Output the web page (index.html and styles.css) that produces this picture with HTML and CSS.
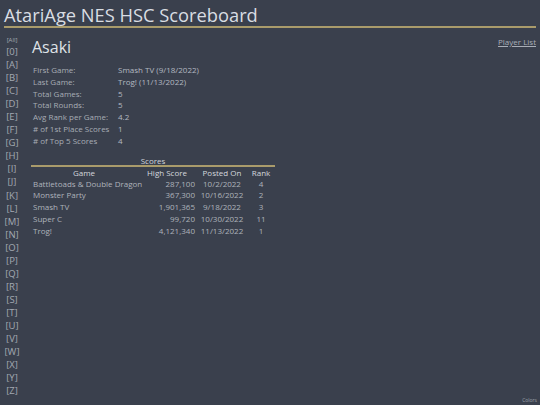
FILE: index.html
```html
<!DOCTYPE html>
<html>
<head>
<meta charset="utf-8">
<link rel="stylesheet" href="styles.css">
</head>
<body>
<header class="top">
  <h1 class="title">AtariAge NES HSC Scoreboard</h1>
</header>
<div class="main">
  <nav class="letters">
    <a class="all">[All]</a>
    <a>[0]</a><a>[A]</a><a>[B]</a><a>[C]</a><a>[D]</a><a>[E]</a><a>[F]</a><a>[G]</a><a>[H]</a><a>[I]</a><a>[J]</a><a>[K]</a><a>[L]</a><a>[M]</a><a>[N]</a><a>[O]</a><a>[P]</a><a>[Q]</a><a>[R]</a><a>[S]</a><a>[T]</a><a>[U]</a><a>[V]</a><a>[W]</a><a>[X]</a><a>[Y]</a><a>[Z]</a>
  </nav>
  <section class="content">
    <div class="head-row">
      <h2 class="player">Asaki</h2>
      <a class="plist">Player List</a>
    </div>
    <table class="stats">
      <tr><td class="lbl">First Game:</td><td>Smash TV (9/18/2022)</td></tr>
      <tr><td class="lbl">Last Game:</td><td>Trog! (11/13/2022)</td></tr>
      <tr><td class="lbl">Total Games:</td><td>5</td></tr>
      <tr><td class="lbl">Total Rounds:</td><td>5</td></tr>
      <tr><td class="lbl">Avg Rank per Game:</td><td>4.2</td></tr>
      <tr><td class="lbl"># of 1st Place Scores</td><td>1</td></tr>
      <tr><td class="lbl"># of Top 5 Scores</td><td>4</td></tr>
    </table>
    <table class="scores">
      <caption>Scores</caption>
      <colgroup>
        <col class="c1"><col class="c2"><col class="c3"><col class="c4">
      </colgroup>
      <thead>
        <tr><th>Game</th><th>High Score</th><th>Posted On</th><th>Rank</th></tr>
      </thead>
      <tbody>
        <tr><td class="g">Battletoads &amp; Double Dragon</td><td class="n">287,100</td><td class="c">10/2/2022</td><td class="c">4</td></tr>
        <tr><td class="g">Monster Party</td><td class="n">367,300</td><td class="c">10/16/2022</td><td class="c">2</td></tr>
        <tr><td class="g">Smash TV</td><td class="n">1,901,365</td><td class="c">9/18/2022</td><td class="c">3</td></tr>
        <tr><td class="g">Super C</td><td class="n">99,720</td><td class="c">10/30/2022</td><td class="c">11</td></tr>
        <tr><td class="g">Trog!</td><td class="n">4,121,340</td><td class="c">11/13/2022</td><td class="c">1</td></tr>
      </tbody>
    </table>
  </section>
</div>
<a class="colors">Colors</a>
</body>
</html>
```
FILE: styles.css
```css
html, body {
  margin: 0;
  padding: 0;
  background: #3a404d;
  height: 100%;
}
body {
  font-family: "Open Sans", "DejaVu Sans", sans-serif;
  color: #b4b9c1;
  position: relative;
  overflow: hidden;
}
.top {
  padding: 4px 4px 0 4px;
}
.title {
  margin: 0;
  font-size: 18.3px;
  font-weight: 400;
  line-height: 21px;
  color: #d9dde3;
  border-bottom: 2px solid #a99b6b;
  padding-bottom: 1px;
}
.main {
  display: flex;
  padding-top: 10px;
}
.letters {
  width: 22px;
  display: flex;
  flex-direction: column;
  align-items: center;
  padding-left: 1px;
}
.letters a {
  font-size: 9.5px;
  line-height: 13.05px;
  color: #a3a9b2;
}
.letters a.all {
  font-size: 6px;
  line-height: 9px;
  margin-top: -2px;
}
.content {
  flex: 1;
  padding-left: 9px;
  padding-right: 4px;
}
.head-row {
  display: flex;
  justify-content: space-between;
  align-items: flex-start;
  margin-top: -2px;
}
.player {
  margin: 0;
  font-size: 16px;
  font-weight: 400;
  line-height: 22px;
  color: #dfe2e7;
}
.plist {
  font-size: 8px;
  color: #a9aeb7;
  text-decoration: underline;
  margin-top: 0;
}
.stats {
  border-collapse: collapse;
  margin-top: 6px;
  font-size: 8px;
  color: #b4b9c1;
}
.stats td {
  padding: 0 1px;
  height: 11.8px;
  line-height: 11.8px;
  white-space: nowrap;
}
.stats td.lbl {
  width: 83px;
  color: #a8adb5;
}
.scores {
  border-collapse: collapse;
  margin-top: 9px;
  font-size: 8px;
  width: 244px;
  margin-left: -1px;
  table-layout: fixed;
}
.scores col.c1 { width: 106px; }
.scores col.c2 { width: 60px; }
.scores col.c3 { width: 50px; }
.scores col.c4 { width: 28px; }
.scores caption {
  font-size: 8px;
  line-height: 9px;
  color: #d0d4da;
  border-bottom: 2px solid #a99b6b;
}
.scores th {
  font-weight: 400;
  color: #d4d8de;
  line-height: 11px;
  padding: 0 2px;
  white-space: nowrap;
}
.scores td {
  line-height: 11.8px;
  padding: 0 2px;
  white-space: nowrap;
  color: #aeb3bb;
}
.scores td.g { text-align: left; overflow: visible; }
.scores td.n { text-align: right; }
.scores td.c { text-align: center; }
.colors {
  position: absolute;
  right: 3px;
  bottom: 2px;
  font-size: 5px;
  color: #9aa0a9;
}
```
